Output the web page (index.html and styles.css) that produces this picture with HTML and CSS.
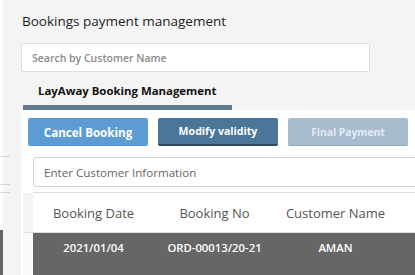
FILE: index.html
```html
<!DOCTYPE html>
<html>

<head>
    <meta charset="UTF-8">
    <title>Bookings payment management</title>
    <link rel="stylesheet" href="styles.css">
</head>

<body>
    <div class="page">
        <!-- 后面那层页面露出来的一条边 -->
        <div class="edge">
            <div class="edge_line line_a"></div>
            <div class="edge_line line_b"></div>
            <div class="edge_line line_c"></div>
            <div class="edge_dark"></div>
        </div>
        <div class="main">
            <h1 class="title">Bookings payment management</h1>
            <div class="search">
                <input type="text" placeholder="Search by Customer Name">
            </div>
            <div class="tabs">
                <div class="tab active">LayAway Booking Management</div>
            </div>
            <div class="panel">
                <div class="actions">
                    <button class="btn btn_cancel">Cancel Booking</button>
                    <button class="btn btn_modify">Modify validity</button>
                    <button class="btn btn_final">Final Payment</button>
                </div>
                <div class="info">
                    <input type="text" placeholder="Enter Customer Information">
                </div>
                <table class="grid">
                    <thead>
                        <tr>
                            <th class="sel"></th>
                            <th>Booking Date</th>
                            <th>Booking No</th>
                            <th>Customer Name</th>
                            <th class="rest"></th>
                        </tr>
                    </thead>
                    <tbody>
                        <tr class="row_on">
                            <td class="sel"></td>
                            <td>2021/01/04</td>
                            <td>ORD-00013/20-21</td>
                            <td>AMAN</td>
                            <td class="rest"></td>
                        </tr>
                    </tbody>
                </table>
            </div>
        </div>
    </div>
</body>

</html>
```

FILE: styles.css
```css
* {
    margin: 0;
    padding: 0;
    box-sizing: border-box;
}
body {
    width: 415px;
    height: 275px;
    overflow: hidden;
    background-color: #f4f4f4;
    font-family: "Open Sans", "Liberation Sans", sans-serif;
    color: #222;
}
.page {
    display: flex;
    height: 275px;
}
/* 左边的窄条 */
.edge {
    display: flex;
    flex-direction: column;
    width: 3px;
    height: 275px;
    background-color: #fff;
}
.edge_line {
    width: 10px;
    height: 1px;
    background-color: #d6d6d6;
}
.line_a {
    margin-top: 156px;
}
.line_b {
    margin-top: 27px;
}
.line_c {
    margin-top: 7px;
}
.edge_dark {
    margin-top: 37px;
    flex: 1;
    background-color: #666;
}
.main {
    flex: 1;
    min-width: 0;
    padding: 11px 0 0 18px;
    overflow: hidden;
}
.title {
    margin-left: 1px;
    font-size: 13.5px;
    line-height: 20px;
    font-weight: normal;
    color: #1e1e1e;
}
.search {
    margin-top: 12px;
    width: 349px;
}
.search input,
.info input {
    display: block;
    width: 100%;
    background-color: #fff;
    outline: none;
    font-family: inherit;
}
.search input {
    height: 29px;
    padding-left: 10px;
    border: 1px solid #dcdcdc;
    border-radius: 2px;
    font-size: 10.5px;
    font-weight: 600;
}
.search input::placeholder {
    color: #8a8a8a;
}
.tabs {
    display: flex;
    margin-top: 9px;
    margin-left: 2px;
}
.tab {
    width: 209px;
    padding: 0 0 4px 15px;
    font-size: 11.4px;
    line-height: 20px;
    font-weight: bold;
    color: #111;
}
.tab.active {
    border-bottom: 5px solid #627a91;
}
/* 白色面板，右边超出窗口 */
.panel {
    width: 430px;
    height: 200px;
    background-color: #fff;
}
.actions {
    display: flex;
    gap: 10px;
    padding: 8px 0 0 7px;
}
.btn {
    width: 120px;
    height: 28px;
    border: none;
    border-radius: 2px;
    font-family: inherit;
    font-weight: bold;
    font-size: 10.6px;
    color: #fff;
}
.btn_cancel {
    background-color: #5d9cd2;
    font-size: 11.6px;
}
.btn_modify {
    background-color: #4b7599;
    border-bottom: 2px solid #2d4961;
}
.btn_final {
    background-color: #a8bcd0;
    border-bottom: 1px solid #95a9bd;
    color: #e4eaf1;
    font-size: 10.3px;
}
.info {
    margin: 11px 0 0 12px;
    width: 410px;
}
.info input {
    height: 30px;
    padding-left: 10px;
    border: 1px solid #cfcfcf;
    border-radius: 3px;
    font-size: 11.6px;
}
.info input::placeholder {
    color: #666;
}
.grid {
    margin: 5px 0 0 2px;
    border-collapse: collapse;
    table-layout: fixed;
    width: 420px;
}
.grid th,
.grid td {
    width: 121px;
    text-align: center;
    white-space: nowrap;
}
.grid .sel {
    width: 10px;
}
.grid .rest {
    width: 47px;
}
.grid th {
    height: 40px;
    border-top: 1px solid #dedede;
    border-bottom: 1px solid #dedede;
    font-size: 13px;
    font-weight: normal;
    color: #555;
}
.grid th.sel {
    border-top: none;
    background-color: #f4f4f4;
}
.grid td {
    height: 50px;
    padding-bottom: 20px;
    font-size: 11.3px;
    font-weight: 600;
    color: #fff;
}
.row_on td {
    background-color: #666;
}
.row_on td.sel {
    background-color: #fafafa;
}
```
